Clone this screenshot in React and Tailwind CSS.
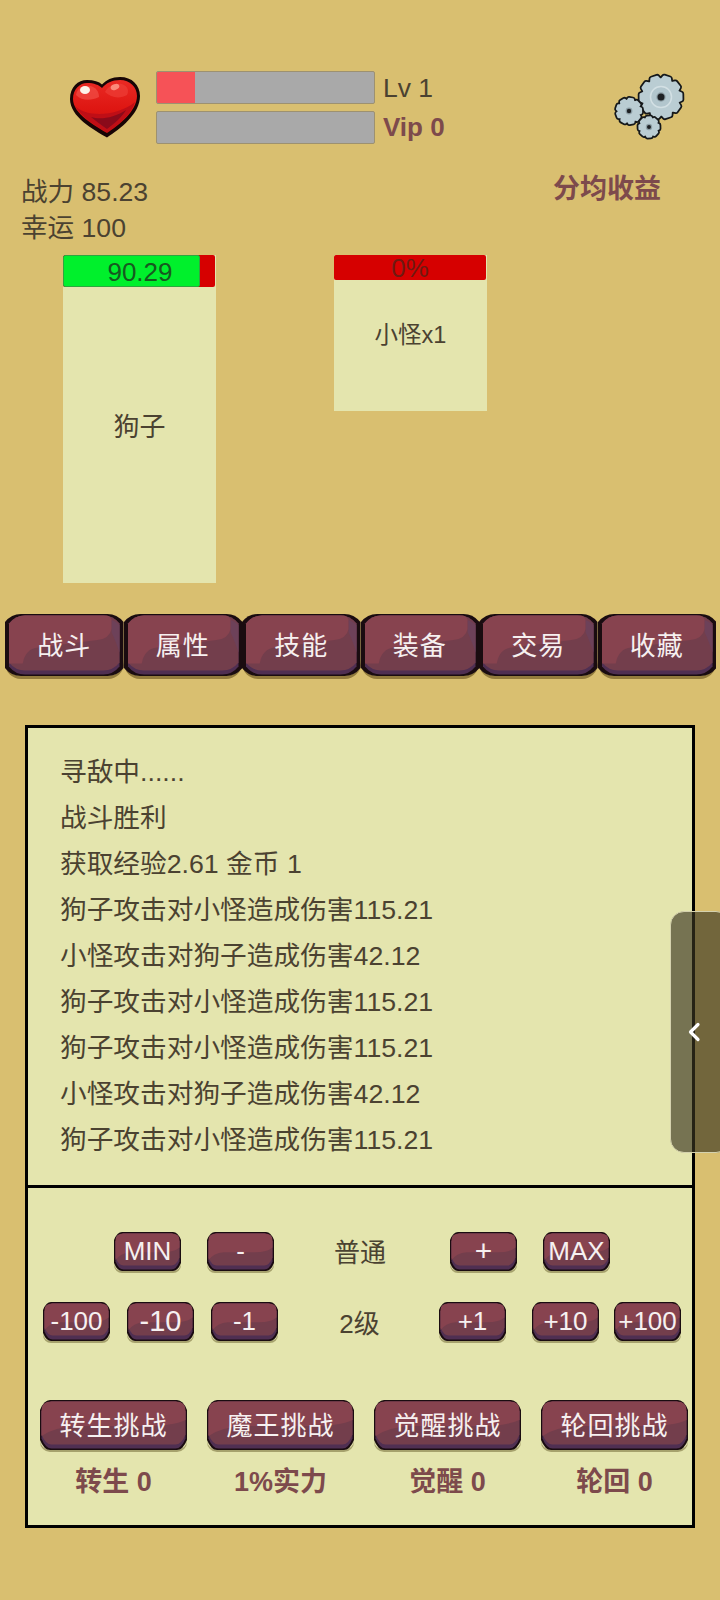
const TABS = ["战斗", "属性", "技能", "装备", "交易", "收藏"];

const LOG = [
  "寻敌中......",
  "战斗胜利",
  "获取经验2.61 金币 1",
  "狗子攻击对小怪造成伤害115.21",
  "小怪攻击对狗子造成伤害42.12",
  "狗子攻击对小怪造成伤害115.21",
  "狗子攻击对小怪造成伤害115.21",
  "小怪攻击对狗子造成伤害42.12",
  "狗子攻击对小怪造成伤害115.21",
];

const CHALLENGES = [
  { label: "转生挑战", stat: "转生 0" },
  { label: "魔王挑战", stat: "1%实力" },
  { label: "觉醒挑战", stat: "觉醒 0" },
  { label: "轮回挑战", stat: "轮回 0" },
];

// the raised maroon plate behind every button
function ButtonSkin({ w, h, r, tab }) {
  const shape = (x, y, pw, ph, rad, ry) =>
    `M${x} ${y + ry} Q${x + rad * 0.4} ${y} ${x + rad} ${y} H${x + pw - rad} Q${x + pw - rad * 0.4} ${y} ${x + pw} ${y + ry} V${y + ph - ry} Q${x + pw - rad * 0.4} ${y + ph} ${x + pw - rad} ${y + ph} H${x + rad} Q${x + rad * 0.4} ${y + ph} ${x} ${y + ph - ry} Z`;
  const side = tab ? 4 : 1.5;
  const rx = tab ? 16 : r;
  const ry = tab ? 8 : r;
  return (
    <svg
      className="absolute inset-0 w-full h-full"
      viewBox={`0 0 ${w} ${h}`}
      preserveAspectRatio="none"
    >
      <path d={shape(0, 0, w, h, rx, ry)} fill="#1a0c10" />
      <path d={shape(side, 1.5, w - side * 2, h - 3, rx, ry)} fill="#4f2f52" />
      <path d={shape(side, 1.5, w - side * 2, h - 7, rx, ry)} fill="#733e4c" />
      <path
        d={
          tab
            ? `M${side} 10 Q${side + 6} 1.5 ${side + 16} 1.5 H${w * 0.86} Q${w * 0.89} 2 ${w * 0.9} 6 V${h * 0.24} Q${w * 0.88} ${h * 0.4} ${w * 0.78} ${h * 0.42} L${w * 0.28} ${h * 0.54} Q${w * 0.17} ${h * 0.56} ${w * 0.15} ${h * 0.8} L${side} ${h * 0.8} Z`
            : `M${side} ${r} Q${side} 1.5 ${r + 1} 1.5 H${w - r - 1} Q${w - side} 1.5 ${w - side} ${r} V${h * 0.4} Q${w * 0.9} ${h * 0.52} ${w * 0.72} ${h * 0.52} H${w * 0.25} Q${w * 0.1} ${h * 0.54} ${side} ${h * 0.72} Z`
        }
        fill="#87434f"
      />
      {tab && <path d={`M${w * 0.9} 6 Q${w - 8} 7 ${w - side} 11 V${h * 0.62} Q${w * 0.93} ${h * 0.42} ${w * 0.9} ${h * 0.3} Z`} fill="#6d4159" />}
    </svg>
  );
}

function GameButton({ children, className = "", w, h, r = 8, tab, textClass = "text-[26px]" }) {
  return (
    <button
      className={`relative flex items-center justify-center shrink-0 ${className}`}
      style={{ width: w, height: h }}
    >
      <ButtonSkin w={w} h={h} r={r} tab={tab} />
      <span className={`relative text-[#f6f0f0] leading-none whitespace-nowrap ${textClass}`}>{children}</span>
    </button>
  );
}

function HeartIcon() {
  return (
    <svg viewBox="0 0 70 61" className="w-[70px] h-[61px] shrink-0">
      <defs>
        <linearGradient id="heartFill" x1="0" y1="0" x2="0" y2="1">
          <stop offset="0" stopColor="#ea2a24" />
          <stop offset="0.55" stopColor="#de1612" />
          <stop offset="1" stopColor="#c60f10" />
        </linearGradient>
      </defs>
      <path
        d="M37 60.5 C24 53 0 40 0 22 C0 10 8 3 17 3 C24 3 29 4.5 32 7.5 C36 3 42 0 50 0 C62 0 70 8 70 19 C70 37 50 52 37 60.5 Z"
        fill="#170505"
      />
      <path
        d="M37 56 C25 49 3 37 3 22 C3 12 10 6 17 6 C24 6 29 8 32 11 C36 6 42 3 50 3 C60 3 67 10 67 19 C67 34 49 48 37 56 Z"
        fill="url(#heartFill)"
      />
      <path d="M5 29 C18 42 50 38 65 25 C61 38 48 48 37 55 C24 48 11 39 5 29 Z" fill="#bf0e16" />
      <path d="M21 40 C30 43 44 41 56 33 C52 40 45 46 37 52 C31 48 26 44 21 40 Z" fill="#8a0a1a" />
      <path d="M6 18 C7 11 14 8 20 9 C26 10 29 15 29 20 C21 24 12 24 6 18 Z" fill="#f4574f" opacity="0.6" />
      <path d="M35 15 C38 9 45 6 52 7 C58 9 59 14 57 18 C50 22 41 21 35 15 Z" fill="#ee4039" opacity="0.65" />
      <ellipse cx="15" cy="13" rx="5" ry="4" fill="#fdf3ea" />
      <ellipse cx="45" cy="10" rx="4.5" ry="2.8" fill="#fb8a7a" transform="rotate(-20 45 10)" />
    </svg>
  );
}

// builds one cog outline from its centre, radii and tooth count
function cogPath(cx, cy, outer, inner, teeth) {
  const pts = [];
  const step = (Math.PI * 2) / teeth;
  for (let i = 0; i < teeth; i++) {
    const a = i * step;
    [
      [inner, -0.44],
      [outer, -0.26],
      [outer, 0.2],
      [inner, 0.38],
    ].forEach(([rad, off]) => {
      const t = a + off * step;
      pts.push(`${(cx + rad * Math.cos(t)).toFixed(1)} ${(cy + rad * Math.sin(t)).toFixed(1)}`);
    });
  }
  return `M${pts.join(" L")} Z`;
}

function Cog({ cx, cy, outer, inner, teeth, hole, ring }) {
  const d = cogPath(cx, cy, outer, inner, teeth);
  return (
    <g>
      <path d={d} fill="#15181a" stroke="#15181a" strokeWidth="6" strokeLinejoin="round" />
      <path d={d} fill="#bacdd3" stroke="#bacdd3" strokeWidth="2.5" strokeLinejoin="round" />
      {ring && <circle cx={cx} cy={cy} r={ring} fill="#b2c6cd" stroke="#d3e0e4" strokeWidth="1.5" />}
      <circle cx={cx} cy={cy} r={hole + 1.2} fill="#8d9fa6" />
      <circle cx={cx} cy={cy} r={hole} fill="#1d2023" />
    </g>
  );
}

function GearIcon() {
  return (
    <svg viewBox="0 0 74 70" className="w-[74px] h-[70px] shrink-0 overflow-visible">
      <Cog cx={47} cy={26} outer={20.5} inner={17.5} teeth={10} hole={3.5} ring={10.5} />
      <Cog cx={15} cy={40} outer={12} inner={10} teeth={9} hole={2.2} />
      <Cog cx={35} cy={56} outer={9.5} inner={8} teeth={8} hole={2} />
    </svg>
  );
}

function ProgressBar({ fill }) {
  return (
    <div className="relative h-[33px] w-[219px] rounded-[2px] border border-[#9d9170] bg-[#a9a9a9] overflow-hidden">
      {fill && <div className="h-full w-[38px] bg-[#f65257]" />}
    </div>
  );
}

export default function App() {
  return (
    <div
      className="relative w-[720px] h-[1600px] overflow-hidden bg-[#d9bf70] text-[#4b4231] text-[26px]"
      style={{ fontFamily: '"Liberation Sans", "Noto Sans CJK SC", sans-serif' }}
    >
      {/* top status */}
      <div className="flex pt-[71px] pl-[70px] h-[165px]">
        <div className="pt-[6px] mr-[16px]">
          <HeartIcon />
        </div>
        <div className="flex flex-col gap-[7px]">
          <ProgressBar fill />
          <ProgressBar />
        </div>
        <div className="ml-[8px] flex flex-col leading-[40px] -mt-[3px]">
          <span className="text-[26.5px]">Lv 1</span>
          <span className="font-bold text-[#7d4a4c] -mt-[1px]">Vip 0</span>
        </div>
        <div className="ml-auto mr-[32px]">
          <GearIcon />
        </div>
      </div>

      <div className="flex justify-between pl-[21px] pr-[59px] h-[90px] leading-[36px]">
        <div className="pt-[9px] text-[26.6px]">
          <div>战力 85.23</div>
          <div>幸运 100</div>
        </div>
        <div className="pt-[6px] font-bold text-[27px] text-[#7d4a4c]">分均收益</div>
      </div>

      {/* fighters */}
      <div className="flex items-start pl-[63px] h-[358px]">
        <div className="w-[153px] h-[328px] bg-[#e4e5ae] flex flex-col">
          <div className="relative h-[32px] w-[152px] rounded-[2px] bg-[#d60000] overflow-hidden">
            <div className="absolute inset-y-0 left-0 w-[137px] rounded-[2px] bg-[#00f02c] border border-[#2fa53f]" />
            <span className="absolute inset-0 flex items-center justify-center pl-[2px] pt-[1px] text-[#17591f] leading-none">90.29</span>
          </div>
          <div className="flex-1 flex items-center justify-center pb-[16px]">狗子</div>
        </div>
        <div className="ml-[118px] w-[153px] h-[156px] bg-[#e4e5ae] flex flex-col">
          <div className="h-[25px] w-[152px] rounded-[2px] bg-[#d60000] flex items-center justify-center text-[#6e1a12] leading-none">0%</div>
          <div className="flex-1 flex items-center justify-center text-[23.5px] pb-[19px]">小怪x1</div>
        </div>
      </div>

      {/* tabs */}
      <div className="flex pl-[5px] pt-[1px] h-[112px]">
        {TABS.map((t) => (
          <GameButton
            key={t}
            w={118.5}
            h={62}
            r={14}
            tab
            className="rounded-[16px] shadow-[0_3px_0_rgba(90,70,20,0.55)]"
            textClass="text-[26px] tracking-[1px] pt-[2px]"
          >
            {t}
          </GameButton>
        ))}
      </div>

      {/* log and controls */}
      <div className="ml-[25px] w-[670px] h-[803px] border-[3px] border-black bg-[#e4e5ae] flex flex-col">
        <div className="h-[460px] shrink-0 border-b-[3px] border-black pl-[32px] pt-[21px] text-[26.7px] leading-[46px]">
          {LOG.map((line, i) => (
            <div key={i}>{line}</div>
          ))}
        </div>

        <div className="flex-1 relative">
          <div className="flex items-center pt-[44px] pl-[86px] h-[82px]">
            <GameButton w={67} h={39} className="rounded-[8px] shadow-[0_2px_0_rgba(90,80,30,0.45)]">MIN</GameButton>
            <GameButton w={67} h={39} className="ml-[26px] rounded-[8px] shadow-[0_2px_0_rgba(90,80,30,0.45)]">-</GameButton>
            <div className="w-[176px] text-center pr-[4px] pt-[4px]">普通</div>
            <GameButton w={67} h={39} className="rounded-[8px] shadow-[0_2px_0_rgba(90,80,30,0.45)]" textClass="text-[30px]">+</GameButton>
            <GameButton w={67} h={39} className="ml-[26px] rounded-[8px] shadow-[0_2px_0_rgba(90,80,30,0.45)]">MAX</GameButton>
          </div>

          <div className="flex items-center mt-[32px] pl-[15px] h-[38px]">
            <GameButton w={67} h={39} className="rounded-[8px] shadow-[0_2px_0_rgba(90,80,30,0.45)]">-100</GameButton>
            <GameButton w={67} h={39} className="ml-[17px] rounded-[8px] shadow-[0_2px_0_rgba(90,80,30,0.45)]" textClass="text-[29px]">-10</GameButton>
            <GameButton w={67} h={39} className="ml-[17px] rounded-[8px] shadow-[0_2px_0_rgba(90,80,30,0.45)]">-1</GameButton>
            <div className="w-[161px] text-center pl-[2px] pt-[6px]">2级</div>
            <GameButton w={67} h={39} className="rounded-[8px] shadow-[0_2px_0_rgba(90,80,30,0.45)]">+1</GameButton>
            <GameButton w={67} h={39} className="ml-[26px] rounded-[8px] shadow-[0_2px_0_rgba(90,80,30,0.45)]">+10</GameButton>
            <GameButton w={67} h={39} className="ml-[15px] rounded-[8px] shadow-[0_2px_0_rgba(90,80,30,0.45)]">+100</GameButton>
          </div>

          <div className="grid grid-cols-[147px_147px_147px_147px] gap-x-[20px] pl-[12px] mt-[60px]">
            {CHALLENGES.map((c) => (
              <div key={c.label} className="flex flex-col items-center">
                <GameButton w={147} h={50} r={10} className="rounded-[10px] shadow-[0_2px_0_rgba(90,80,30,0.45)]" textClass="text-[26px] tracking-[1px] pt-[1px]">
                  {c.label}
                </GameButton>
                <div className="mt-[17px] leading-[30px] font-bold text-[27px] text-[#7d4a4c]">{c.stat}</div>
              </div>
            ))}
          </div>
        </div>
      </div>

      {/* slide-out drawer handle */}
      <div className="absolute left-[670px] top-[911px] w-[60px] h-[242px] rounded-[14px] border border-[#d5d2ae] bg-[#3a3520]/65 flex items-center pl-[16px]">
        <svg viewBox="0 0 14 20" className="w-[14px] h-[20px]">
          <path d="M11 2.5 L3.5 10 L11 17.5" fill="none" stroke="#ffffff" strokeWidth="3.2" strokeLinecap="round" strokeLinejoin="round" />
        </svg>
      </div>
    </div>
  );
}
